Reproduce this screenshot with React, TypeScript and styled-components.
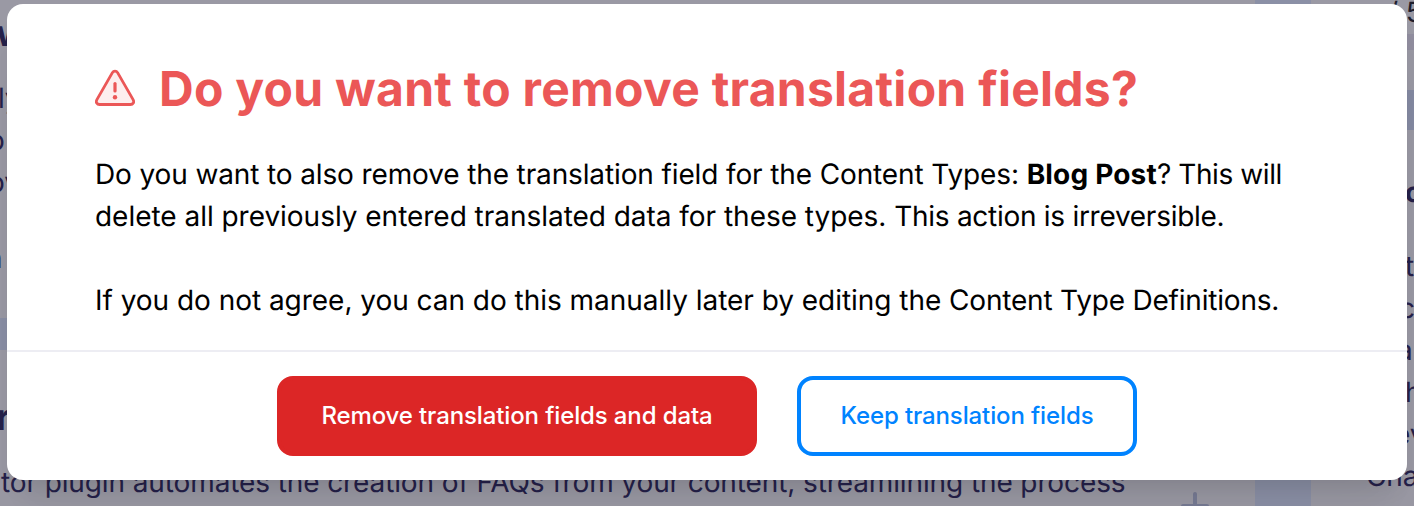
import React from "react";
import styled, { createGlobalStyle } from "styled-components";

const GlobalStyle = createGlobalStyle`
  *, *::before, *::after { box-sizing: border-box; }
  body { margin: 0; overflow: hidden; font-family: Inter, sans-serif; text-rendering: geometricPrecision; }
  h2, p { margin: 0; }
`;

const Screen = styled.div`
  position: relative;
  height: 506px;
  overflow: hidden;
  background: #9a99a4;
`;

const Page = styled.div`
  display: grid;
  grid-template-columns: 1255px 56px 103px;
  height: 506px;
  color: #25214a;
`;

const Column = styled.div`
  min-width: 0;
  height: 506px;
  overflow: hidden;
`;

const Gutter = styled.div`
  background: #8b90a6;
`;

const Line = styled.div<{ $indent?: number; $gap?: number; $strong?: boolean; $size?: number; $ink?: string }>`
  height: 42px;
  margin-top: ${(p) => p.$gap ?? 0}px;
  text-indent: ${(p) => p.$indent ?? 0}px;
  font-size: ${(p) => p.$size ?? 28}px;
  font-weight: ${(p) => (p.$strong ? 700 : 400)};
  line-height: 42px;
  letter-spacing: -0.11px;
  white-space: pre;
  color: ${(p) => p.$ink ?? "inherit"};
`;

const Band = styled.div<{ $height: number; $gap: number; $tone: string }>`
  height: ${(p) => p.$height}px;
  margin-top: ${(p) => p.$gap}px;
  background: ${(p) => p.$tone};
`;

const TextRow = styled.div`
  display: flex;
  margin-top: 22px;
`;

const PlusIcon = styled.svg`
  flex: none;
  width: 28px;
  height: 28px;
  margin: 30px 46px 0 auto;
`;

const Overlay = styled.div`
  position: absolute;
  inset: 0;
  padding: 4px 7px 26px;
`;

const Dialog = styled.section`
  display: flex;
  flex-direction: column;
  height: 476px;
  border-radius: 16px;
  background: #fff;
  box-shadow: 0 40px 50px -10px rgba(0, 0, 0, 0.06), 0 16px 24px -12px rgba(0, 0, 0, 0.12);
`;

const Content = styled.div`
  height: 346px;
  padding: 57px 88px 0;
`;

const TitleRow = styled.div`
  display: flex;
  gap: 24px;
  height: 56px;
`;

const WarningIcon = styled.svg`
  flex: none;
  width: 40px;
  height: 40px;
  margin-top: 7px;
`;

const Title = styled.h2`
  color: #eb5757;
  font-size: 48px;
  font-weight: 700;
  line-height: 56px;
  letter-spacing: 0.27px;
  white-space: nowrap;
`;

const Message = styled.p`
  margin-top: 36px;
  color: #000;
  font-size: 28px;
  line-height: 42px;
  white-space: nowrap;

  & + & { margin-top: 42px; }

  b { letter-spacing: 0.18px; }
`;

const Phrase = styled.span<{ $tracking: number }>`
  letter-spacing: ${(p) => p.$tracking}px;
`;

const Footer = styled.div`
  display: flex;
  justify-content: center;
  gap: 40px;
  padding-top: 24px;
  border-top: 2px solid #ededf3;
`;

const Button = styled.button<{ $variant: "danger" | "outline" }>`
  width: ${(p) => (p.$variant === "danger" ? 480 : 340)}px;
  height: 80px;
  padding: 0;
  border: 4px solid ${(p) => (p.$variant === "danger" ? "#dc2626" : "#0083ff")};
  border-radius: 16px;
  background: ${(p) => (p.$variant === "danger" ? "#dc2626" : "#fff")};
  color: ${(p) => (p.$variant === "danger" ? "#fff" : "#0083ff")};
  font: 500 24px/32px Inter, sans-serif;
  letter-spacing: -0.12px;
  white-space: nowrap;
`;

export default function App() {
  return (
    <>
      <GlobalStyle />
      <Screen>
        <Page>
          <Column>
            <Line $strong $size={36} $gap={12} $indent={-4}>w</Line>
            <Line $gap={23} $indent={-2}>ly</Line>
            <Line $indent={-12}>o</Line>
            <Line $indent={-12}>ov</Line>
            <Line $gap={34} $indent={-14}>n</Line>
            <Band $gap={39} $height={32} $tone="#8a8fa5" />
            <Line $strong $size={36} $gap={46} $indent={-4}>r</Line>
            <TextRow>
              <Line $gap={1} $indent={1}>tor plugin automates the creation of FAQs from your content, streamlining the process</Line>
              <PlusIcon viewBox="0 0 28 28" fill="none" stroke="#777b94" strokeWidth="4" strokeLinecap="round">
                <path d="M14 4v22M2 16h24" />
              </PlusIcon>
            </TextRow>
          </Column>
          <Gutter />
          <Column>
            <Line $gap={-9} $indent={77} $ink="#1e1d2c">/ 5</Line>
            <Band $gap={1} $height={16} $tone="#918e9f" />
            <Band $gap={40} $height={40} $tone="#858aa2" />
            <Line $strong $gap={41} $indent={94}>o</Line>
            <Line $gap={32} $indent={94}>t</Line>
            <Line $indent={88}>c</Line>
            <Line $indent={86}>a</Line>
            <Line $indent={94}>h</Line>
            <Line $indent={83}>ev</Line>
            <Line $indent={55}>Cha</Line>
          </Column>
        </Page>
        <Overlay>
          <Dialog role="dialog" aria-modal="true">
            <Content>
              <TitleRow>
                <WarningIcon viewBox="0 0 40 40" fill="none" stroke="#eb5757" strokeWidth="2.8" strokeLinecap="round" strokeLinejoin="round">
                  <path d="M17.4 4.6 1.9 31.6C.5 34.2 1.9 36.5 4.6 36.5H35.4C38.1 36.5 39.5 34.2 38.1 31.6L22.6 4.6C21.4 2.6 18.6 2.6 17.4 4.6Z" fill="#fdeeee" />
                  <path d="M20 15.6v7.4" strokeWidth="3.2" />
                  <circle cx="20" cy="29.2" r="2.2" fill="#eb5757" stroke="none" />
                </WarningIcon>
                <Title>Do you want to remove translation fields?</Title>
              </TitleRow>
              <Message>
                <Phrase $tracking={-0.125}>Do you want to also remove the translation field for the Content Types: </Phrase>
                <b>Blog Post</b>
                <Phrase $tracking={-0.4}>? This will</Phrase>
                <br />
                <Phrase $tracking={-0.03}>delete all previously entered translated data for these types. </Phrase>
                <Phrase $tracking={-0.28}>This action is irreversible.</Phrase>
              </Message>
              <Message>
                <Phrase $tracking={-0.03}>If you do not agree, you can do this manually later by editing the </Phrase>
                <Phrase $tracking={-0.2}>Content Type Definitions.</Phrase>
              </Message>
            </Content>
            <Footer>
              <Button $variant="danger">Remove translation fields and data</Button>
              <Button $variant="outline">Keep translation fields</Button>
            </Footer>
          </Dialog>
        </Overlay>
      </Screen>
    </>
  );
}
